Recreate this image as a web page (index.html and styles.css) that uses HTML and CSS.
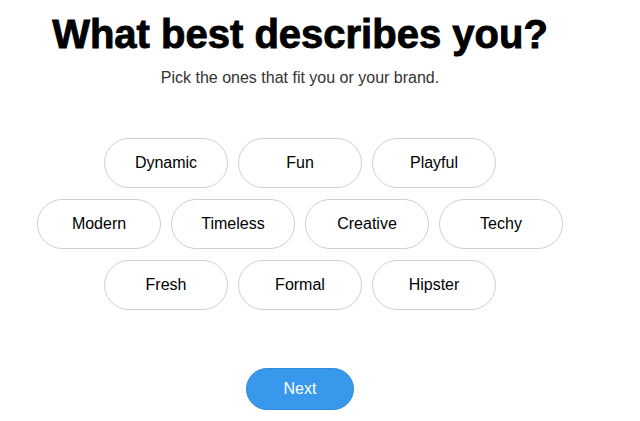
FILE: index.html
```html
<!DOCTYPE html>
<html lang="en">
<head>
    <meta charset="UTF-8">
    <meta name="viewport" content="width=device-width, initial-scale=1.0">
    <title>What best describes you?</title>
    <link rel="stylesheet" href="styles.css">
</head>
<body>

<div class="page">
    <h1 class="title">What best describes you?</h1>
    <p class="subtitle">Pick the ones that fit you or your brand.</p>

    <div class="tags">
        <div class="tagRow">
            <button class="tag">Dynamic</button>
            <button class="tag">Fun</button>
            <button class="tag">Playful</button>
        </div>
        <div class="tagRow">
            <button class="tag">Modern</button>
            <button class="tag">Timeless</button>
            <button class="tag">Creative</button>
            <button class="tag">Techy</button>
        </div>
        <div class="tagRow">
            <button class="tag">Fresh</button>
            <button class="tag">Formal</button>
            <button class="tag">Hipster</button>
        </div>
    </div>

    <button class="nextBtn">Next</button>
</div>

</body>
</html>
```

FILE: styles.css
```css
body {
    margin: 0;
    background: #fff;
    font-family: "Liberation Sans", Arial, sans-serif;
    color: #000;
}

.page {
    width: 600px;
    display: flex;
    flex-direction: column;
    align-items: center;
}

.title {
    margin: 12px 0 0;
    font-size: 40px;
    font-weight: 900;
    line-height: 44px;
    -webkit-text-stroke: 0.9px #000;
}

.subtitle {
    margin: 13px 0 0;
    font-size: 16px;
    line-height: 18px;
    color: #333;
}

.tags {
    margin-top: 51px;
    display: flex;
    flex-direction: column;
    gap: 11px;
}

.tagRow {
    display: flex;
    justify-content: center;
    gap: 10px;
}

.tag {
    width: 124px;
    height: 50px;
    border: 1px solid #cfcfcf;
    border-radius: 25px;
    background: #fff;
    font-family: "Liberation Sans", Arial, sans-serif;
    font-size: 16px;
    color: #000;
    cursor: pointer;
}

.nextBtn {
    margin-top: 58px;
    width: 108px;
    height: 42px;
    border: 1px solid #2f8ae0;
    border-radius: 21px;
    background: #3899ec;
    color: #fff;
    font-family: "Liberation Sans", Arial, sans-serif;
    font-size: 16px;
    cursor: pointer;
}
```
